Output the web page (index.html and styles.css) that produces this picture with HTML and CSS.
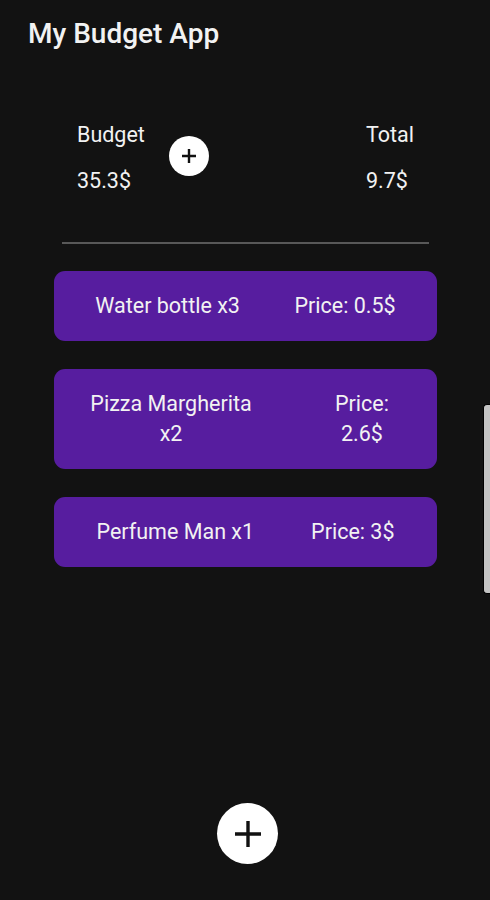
FILE: index.html
```html
<!doctype html>
<html>
  <head>
    <meta charset="utf-8">
    <title>My Budget App</title>
    <link rel="stylesheet" href="styles.css">
  </head>
  <body>
    <div class='app'>
      <header class='appbar'>
        <h1 class='appbar-title'>My Budget App</h1>
      </header>

      <section class='summary'>
        <div class='summary-col'>
          <span class='summary-label'>Budget</span>
          <span class='summary-value'>35.3$</span>
        </div>
        <button class='round-btn round-btn-small' aria-label='Add budget'>
          <svg width='14' height='14' viewBox='0 0 14 14'>
            <path d='M7 0v14M0 7h14' stroke='#111' stroke-width='2.4' />
          </svg>
        </button>
        <div class='summary-col summary-col-right'>
          <span class='summary-label'>Total</span>
          <span class='summary-value'>9.7$</span>
        </div>
      </section>

      <hr class='divider'>

      <main class='items'>
        <div class='item-card'>
          <span class='item-text'>Water bottle x3</span>
          <span class='item-text'>Price: 0.5$</span>
        </div>
        <div class='item-card item-card-wrap'>
          <span class='item-text item-name-narrow'>Pizza Margherita x2</span>
          <span class='item-text item-price-narrow'>Price: 2.6$</span>
        </div>
        <div class='item-card'>
          <span class='item-text'>Perfume Man x1</span>
          <span class='item-text'>Price: 3$</span>
        </div>
      </main>

      <button class='round-btn round-btn-fab' aria-label='Add item'>
        <svg width='26' height='26' viewBox='0 0 26 26'>
          <path d='M13 0v26M0 13h26' stroke='#111' stroke-width='3.4' />
        </svg>
      </button>

      <!-- edge handle drawn over the screen -->
      <div class='edge-handle'></div>
    </div>
  </body>
</html>
```

FILE: styles.css
```css
:root {
  --bg-color: #121212;
  --text-color: #f2f2f2;
  --card-color: #571d9f;
  --divider-color: #585858;
}

body {
  margin: 0;
  background: var(--bg-color);
  color: var(--text-color);
  font-family: Roboto, "Noto Sans", sans-serif;
}

.app {
  position: relative;
  display: flex;
  flex-direction: column;
  min-height: 900px;
  overflow: hidden;
}

.appbar {
  padding: 18px 28px 0;
}

.appbar-title {
  margin: 0;
  font-size: 28px;
  line-height: 32px;
  font-weight: 500;
}

.summary {
  display: flex;
  align-items: center;
  margin-top: 72px;
  padding: 0 76px 0 77px;
}

.summary-col {
  display: flex;
  flex-direction: column;
  gap: 21px;
  font-size: 21.5px;
  line-height: 25px;
}

.summary-col-right {
  margin-left: auto;
}

.round-btn {
  display: flex;
  align-items: center;
  justify-content: center;
  border: none;
  border-radius: 50%;
  background: #fff;
  padding: 0;
}

.round-btn-small {
  width: 40px;
  height: 40px;
  margin: 0 0 4px 24px;
}

.divider {
  margin: 49px 61px 0 62px;
  border: none;
  height: 2px;
  background: var(--divider-color);
}

.items {
  display: flex;
  flex-direction: column;
  gap: 28px;
  margin: 27px 53px 0 54px;
}

.item-card {
  display: flex;
  align-items: center;
  justify-content: space-around;
  padding: 20px 14px;
  border-radius: 11px;
  background: var(--card-color);
}

.item-card-wrap {
  justify-content: space-between;
  padding: 20px 35px 20px 27px;
}

.item-text {
  font-size: 21.5px;
  line-height: 30px;
  text-align: center;
}

.item-name-narrow {
  width: 180px;
}

.item-price-narrow {
  width: 80px;
}

.round-btn-fab {
  width: 61px;
  height: 61px;
  margin: auto 0 36px 217px;
}

.edge-handle {
  position: absolute;
  top: 404px;
  right: 0;
  width: 6px;
  height: 188px;
  background: #c4c4c4;
  border: 1px solid #000;
  border-right: none;
  border-radius: 4px 0 0 4px;
}
```
